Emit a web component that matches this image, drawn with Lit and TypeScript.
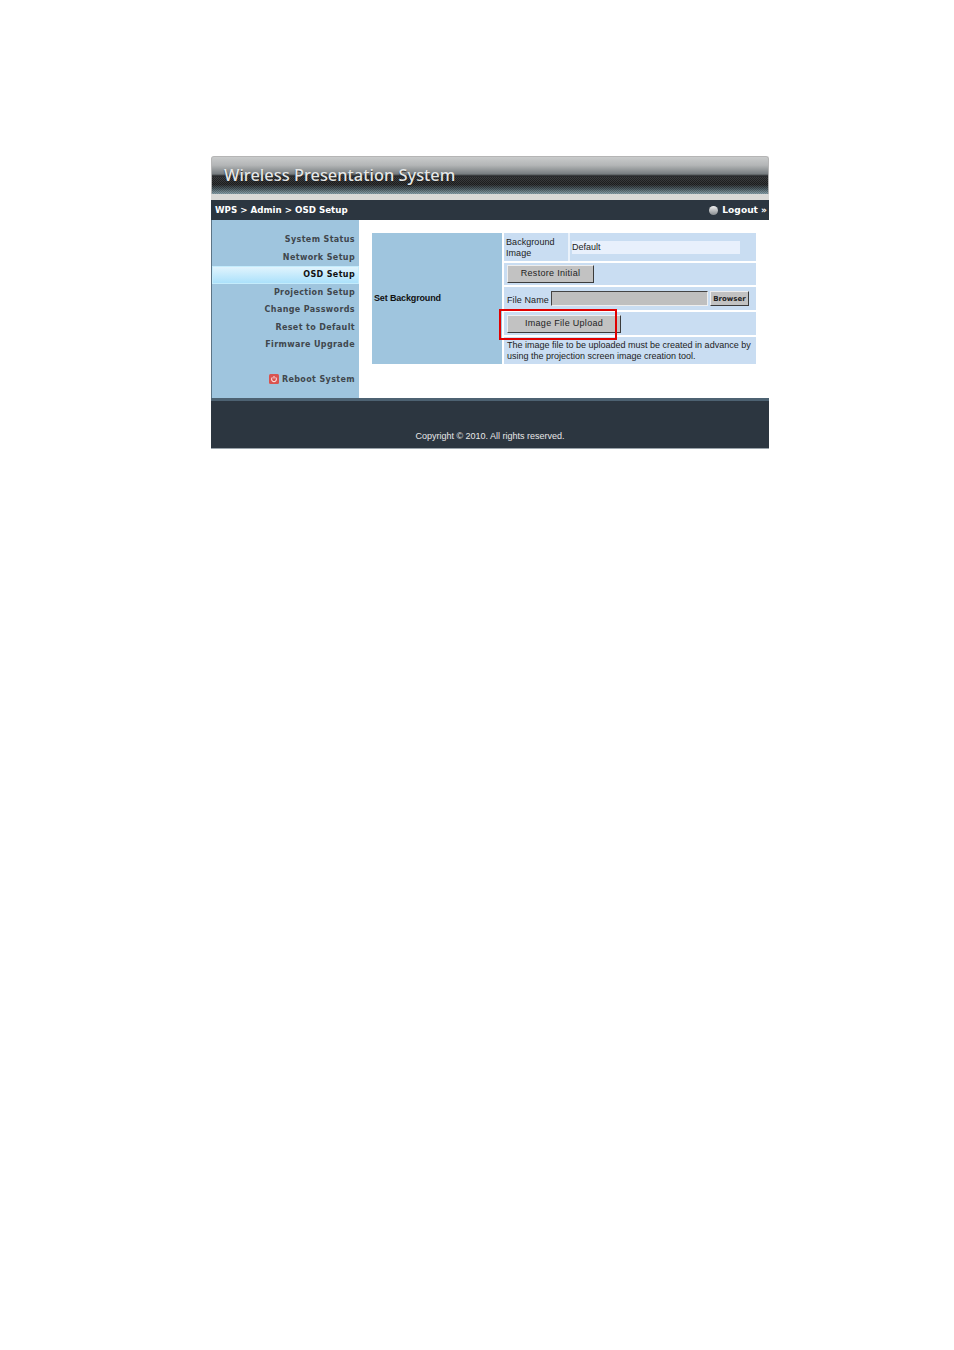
import { LitElement, html, css } from "lit";
import { customElement } from "lit/decorators.js";

const MENU = ["System Status", "Network Setup", "OSD Setup", "Projection Setup", "Change Passwords", "Reset to Default", "Firmware Upgrade"];

@customElement("app-root")
export class AppRoot extends LitElement {
  static styles = css`
    :host { display: block; padding: 156px 0 0 211px; font-family: "Liberation Sans", Arial, sans-serif; color: #111; }
    .frame { width: 558px; }
    .banner { height: 38px; box-sizing: border-box; border: 1px solid #b5b5b5; border-bottom: 0; border-radius: 3px 3px 0 0; position: relative;
      background: linear-gradient(#c9cbcb 0, #b4b6b7 22%, #777d80 46%, #2a2c2e 51%, #1c1d1e 74%, #3f4e55 86%, #7f99a3 100%);
      padding: 8px 0 0 12px; }
    .banner::after { content: ""; position: absolute; left: 0; right: 0; top: 20px; bottom: 0; opacity: 0.1;
      background: repeating-conic-gradient(#000 0 25%, #fff 0 50%) 0 0 / 2px 2px; }
    .title { position: relative; z-index: 1; font: 500 16.4px/20px "Noto Sans", sans-serif; color: #e6e8e8; text-shadow: 0 1px 1px #222; }
    .strip { height: 6px; background: #d9d9d7; }
    .crumb { height: 20px; background: #2c3640; color: #fff; font: bold 8.7px/20px "DejaVu Sans", sans-serif; display: flex; justify-content: space-between; align-items: center; padding: 0 2px 0 4px; }
    .logout { display: flex; align-items: center; gap: 4px; font-size: 9.1px; }
    .ball { width: 9px; height: 9px; border-radius: 50%; background: linear-gradient(#f0f0f0, #878c90); }
    .main { display: flex; height: 178px; }
    .side { width: 148px; box-sizing: border-box; background: #9fc5de; border-left: 1px solid #5c7486; padding-top: 11px; display: flex; flex-direction: column; font: bold 8px/18.5px "DejaVu Sans", sans-serif; color: #40474d; letter-spacing: 0.37px; }
    .item { height: 17.5px; padding-right: 4px; text-align: right; box-sizing: border-box; }
    .item.on { color: #111; background: linear-gradient(#e4f5fd, #a8e0fb); box-shadow: inset 0 0 0 1px #c4ecfc; }
    .reboot { margin-top: 17.5px; display: flex; justify-content: flex-end; align-items: center; gap: 3px; }
    .reboot svg { margin-top: -1px; }
    .content { flex: 1; background: #fff; padding: 13px 13px 0; }
    .table { display: grid; grid-template-columns: 130px 252px; gap: 0 2px; width: 384px; height: 131px; }
    .left { background: #9fc5de; font: bold 9px/11px "Liberation Sans", sans-serif; letter-spacing: -0.15px; padding: 60px 0 0 2px; box-sizing: border-box; }
    .rows { display: flex; flex-direction: column; gap: 2px; position: relative; font: 9px/11px "Liberation Sans", sans-serif; color: #222; }
    .row { background: #c9ddf2; display: flex; align-items: center; padding-left: 3px; box-sizing: border-box; }
    .r1 { height: 28px; padding: 0; }
    .r1 .label { width: 66px; box-sizing: border-box; padding: 2px 0 0 2px; height: 100%; display: flex; align-items: center; border-right: 2px solid #eaf2fb; letter-spacing: 0.06px; }
    .r1 .val { flex: none; width: 168px; height: 13px; margin-left: 2px; background: #e8f0fc; line-height: 13px; box-sizing: border-box; }
    .r2 { height: 22px; }
    .r3 { height: 23px; }
    .r4 { height: 23px; }
    .r5 { height: 27px; }
    .btn { box-sizing: border-box; background: #c2c2c2; border: 1px solid; border-color: #eee #3b3b3b #3b3b3b #eee; color: #222; font: 9px/15px "Liberation Sans", sans-serif; letter-spacing: 0.3px; text-align: center; }
    .b1 { width: 87px; height: 18px; }
    .b3 { width: 114px; height: 18px; }
    .fname { margin-right: 2px; margin-top: 4px; letter-spacing: 0.1px; }
    .input { width: 157px; height: 15px; box-sizing: border-box; background: #bfbfbf; border: 1px solid; border-color: #444 #eee #eee #444; margin-right: 2px; }
    .b2 { width: 39px; height: 15px; font: bold 7px/14px "DejaVu Sans", sans-serif; letter-spacing: 0; }
    .mark { position: absolute; left: -5px; top: 76px; width: 118px; height: 31px; box-sizing: border-box; border: 2px solid #e00000; pointer-events: none; }
    .footer { height: 51px; box-sizing: border-box; background: #2c3640; border-top: 3px solid #4d6272; border-bottom: 1px solid #9aa3ab; color: #e8e8e8; font: 9px/11px "Liberation Sans", sans-serif; text-align: center; padding-top: 30px; }
  `;

  render() {
    return html`
      <div class="frame">
        <div class="banner"><div class="title">Wireless Presentation System</div></div>
        <div class="strip"></div>
        <div class="crumb">
          <span>WPS &gt; Admin &gt; OSD Setup</span>
          <span class="logout"><i class="ball"></i>Logout »</span>
        </div>
        <div class="main">
          <nav class="side">
            ${MENU.map((m) => html`<div class="item ${m === "OSD Setup" ? "on" : ""}">${m}</div>`)}
            <div class="item reboot">
              <svg width="10" height="10" viewBox="0 0 10 10"><rect width="10" height="10" rx="1.5" fill="#d9534f"/><path d="M3.4 3.4A2.4 2.4 0 1 0 6.6 3.4" fill="none" stroke="#fbdcdc" stroke-width="1.1"/><path d="M5 2V4.6" stroke="#fbdcdc" stroke-width="1.1"/></svg>
              <span>Reboot System</span>
            </div>
          </nav>
          <div class="content">
            <div class="table">
              <div class="left">Set Background</div>
              <div class="rows">
                <div class="row r1"><div class="label"><span>Background<br />Image</span></div><div class="val">Default</div></div>
                <div class="row r2"><div class="btn b1">Restore Initial</div></div>
                <div class="row r3"><span class="fname">File Name</span><div class="input"></div><div class="btn b2">Browser</div></div>
                <div class="row r4"><div class="btn b3">Image File Upload</div></div>
                <div class="row r5"><span>The image file to be uploaded must be created in advance by<br />using the projection screen image creation tool.</span></div>
                <div class="mark"></div>
              </div>
            </div>
          </div>
        </div>
        <div class="footer">Copyright © 2010. All rights reserved.</div>
      </div>
    `;
  }
}
